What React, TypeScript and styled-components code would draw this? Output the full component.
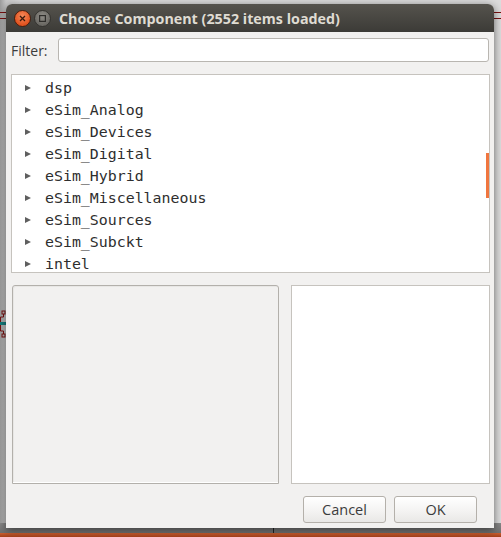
import React from "react";
import styled, { createGlobalStyle } from "styled-components";

const Global = createGlobalStyle`
  html, body { margin: 0; padding: 0; background: #d4d4d4; }
  body { width: 501px; height: 537px; overflow: hidden; }
`;

const Desktop = styled.div`
  position: relative;
  width: 501px;
  height: 537px;
  overflow: hidden;
  background: linear-gradient(to right, #9c9c9c 0px, #c8c8c8 6px, #dcdcdc 20px);
  padding: 4px 0 0 6px;
  box-sizing: border-box;
`;

const WireLine = styled.div<{ $top: number }>`
  position: absolute;
  left: 0;
  right: 0;
  top: ${(p) => p.$top}px;
  height: 1px;
  background: #7a1010;
`;

const BottomBar = styled.div`
  position: absolute;
  left: 0;
  right: 0;
  bottom: 0;
  height: 4px;
  background: linear-gradient(to bottom, #cd5f31, #a2401b);
`;

const BottomShadow = styled.div`
  position: absolute;
  left: 0;
  right: 0;
  bottom: 4px;
  height: 10px;
  background: linear-gradient(to bottom, #8a8a8a, #6f6f6f);
`;

const VTick = styled.div`
  position: absolute;
  left: 273px;
  bottom: 4px;
  width: 1px;
  height: 8px;
  background: #222;
`;

const Part = styled.svg`
  position: absolute;
  left: 0;
  top: 310px;
`;

const Window = styled.div`
  position: relative;
  width: 488px;
  height: 524px;
  background: #f2f1f0;
  border-radius: 6px 6px 0 0;
  box-shadow: 0 2px 9px rgba(0, 0, 0, 0.55);
  display: flex;
  flex-direction: column;
  font-family: "Open Sans", "Noto Sans", sans-serif;
  color: #3c3c3c;
`;

const TitleBar = styled.div`
  height: 28px;
  flex: none;
  border-radius: 6px 6px 0 0;
  background: linear-gradient(to bottom, #55534d, #3c3b37);
  display: flex;
  align-items: center;
  padding-left: 8px;
  gap: 3px;
`;

const CircleBtn = styled.div<{ $kind: "close" | "max" }>`
  width: 15px;
  height: 15px;
  border-radius: 50%;
  border: 1px solid ${(p) => (p.$kind === "close" ? "#4a1f0e" : "#34332f")};
  background: ${(p) =>
    p.$kind === "close"
      ? "radial-gradient(circle at 50% 35%, #f58b5c, #e2531f 70%)"
      : "radial-gradient(circle at 50% 35%, #8e8c86, #6b6964 70%)"};
  display: flex;
  align-items: center;
  justify-content: center;
  flex: none;
`;

const Title = styled.div`
  margin-left: 5px;
  font-family: "Open Sans", "Noto Sans", sans-serif;
  font-weight: 700;
  font-size: 14.3px;
  color: #dfdbd2;
  white-space: nowrap;
`;

const Body = styled.div`
  flex: 1;
  display: flex;
  flex-direction: column;
  padding: 6px 4px 0 5px;
`;

const FilterRow = styled.div`
  display: flex;
  align-items: center;
  height: 24px;
`;

const Label = styled.label`
  font-size: 14px;
  width: 47px;
  flex: none;
`;

const Input = styled.input`
  flex: 1;
  height: 24px;
  box-sizing: border-box;
  border: 1px solid #b9b6b1;
  border-radius: 3px;
  background: #fff;
  outline: none;
  margin-right: 1px;
`;

const Tree = styled.div`
  position: relative;
  margin-top: 12px;
  height: 199px;
  box-sizing: border-box;
  border: 1px solid #c6c3be;
  background: #fff;
  overflow: hidden;
  padding-top: 2px;
`;

const Row = styled.div`
  height: 22px;
  display: flex;
  align-items: center;
  padding-left: 13px;
`;

const Arrow = styled.span`
  width: 0;
  height: 0;
  border-top: 3.5px solid transparent;
  border-bottom: 3.5px solid transparent;
  border-left: 6px solid #5f5f5f;
  margin-right: 14px;
`;

const ItemText = styled.span`
  font-family: "DejaVu Sans Mono", monospace;
  font-size: 14.9px;
  color: #2e2e2e;
`;

const ScrollThumb = styled.div`
  position: absolute;
  right: 0;
  top: 78px;
  width: 3px;
  height: 45px;
  background: #f0763f;
`;

const Lower = styled.div`
  display: flex;
  gap: 12px;
  margin-top: 12px;
  height: 199px;
  padding-left: 1px;
`;

const Preview = styled.div`
  width: 267px;
  box-sizing: border-box;
  border: 1px solid #b3b0ab;
  border-radius: 3px 3px 0 0;
  background: #f2f1f0;
  box-shadow: inset 0 -1px 0 #fff, inset 1px 1px 0 #e8e7e5;
`;

const Info = styled.div`
  flex: 1;
  box-sizing: border-box;
  border: 1px solid #c6c3be;
  background: #fff;
`;

const Buttons = styled.div`
  display: flex;
  justify-content: flex-end;
  gap: 8px;
  margin-top: 12px;
  padding-right: 13px;
`;

const Button = styled.button`
  width: 83px;
  height: 27px;
  border: 1px solid #b4b0aa;
  border-radius: 3px;
  background: linear-gradient(to bottom, #ffffff, #f3f2f1 60%, #e9e8e6);
  font-family: "Open Sans", "Noto Sans", sans-serif;
  font-size: 14.5px;
  color: #3c3c3c;
  padding: 0;
`;

const items = [
  "dsp",
  "eSim_Analog",
  "eSim_Devices",
  "eSim_Digital",
  "eSim_Hybrid",
  "eSim_Miscellaneous",
  "eSim_Sources",
  "eSim_Subckt",
  "intel",
];

export default function App() {
  return (
    <>
      <Global />
      <Desktop>
        <WireLine $top={12} />
        <WireLine $top={18} />
        <Part width="8" height="28" viewBox="0 0 8 28">
          <rect x="2" y="1" width="3" height="3" fill="none" stroke="#7a1010" strokeWidth="1" />
          <rect x="2" y="24" width="3" height="3" fill="none" stroke="#7a1010" strokeWidth="1" />
          <path d="M3.5 4 V7 H0.5 V21 H3.5 V24" fill="none" stroke="#7a1010" strokeWidth="1" />
          <rect x="0" y="12" width="6" height="3" fill="#137c7c" />
        </Part>
        <BottomShadow />
        <VTick />
        <BottomBar />
        <Window>
          <TitleBar>
            <CircleBtn $kind="close">
              <svg width="7" height="7" viewBox="0 0 7 7">
                <path d="M1 1 L6 6 M6 1 L1 6" stroke="#3a1a0c" strokeWidth="1.3" />
              </svg>
            </CircleBtn>
            <CircleBtn $kind="max">
              <svg width="7" height="7" viewBox="0 0 7 7">
                <rect x="0.6" y="0.6" width="5.8" height="5.8" fill="none" stroke="#2e2d2a" strokeWidth="1.2" />
              </svg>
            </CircleBtn>
            <Title>Choose Component (2552 items loaded)</Title>
          </TitleBar>
          <Body>
            <FilterRow>
              <Label>Filter:</Label>
              <Input />
            </FilterRow>
            <Tree>
              {items.map((it) => (
                <Row key={it}>
                  <Arrow />
                  <ItemText>{it}</ItemText>
                </Row>
              ))}
              <ScrollThumb />
            </Tree>
            <Lower>
              <Preview />
              <Info />
            </Lower>
            <Buttons>
              <Button>Cancel</Button>
              <Button>OK</Button>
            </Buttons>
          </Body>
        </Window>
      </Desktop>
    </>
  );
}
